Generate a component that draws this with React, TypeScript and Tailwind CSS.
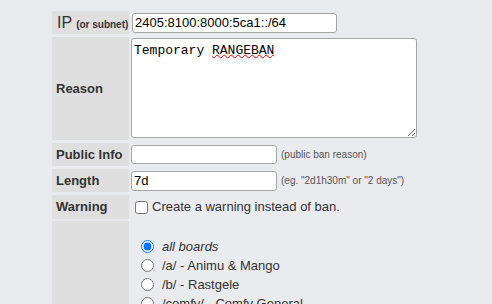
const boards = [
  { id: 'all', label: 'all boards', italic: true, checked: true },
  { id: 'a', label: '/a/ - Animu & Mango' },
  { id: 'b', label: '/b/ - Rastgele' },
  { id: 'comfy', label: '/comfy/ - Comfy General' },
];

function Label({ children, className = '' }: { children: React.ReactNode; className?: string }) {
  return (
    <div className={`bg-[#dfdfdf] flex items-center pl-[4px] font-bold text-[13px] text-[#333] ${className}`}>
      {children}
    </div>
  );
}

export default function App() {
  return (
    <div className="min-h-screen bg-[#eaebef] font-['Liberation_Sans',Arial,sans-serif] text-[#333] pt-[11px] pl-[52px] overflow-hidden h-[304px]">
      <div className="grid grid-cols-[77px_auto] gap-x-[2px] gap-y-[3px] w-max">
        {/* IP */}
        <div className="bg-[#dfdfdf] flex items-center pl-[5px] h-[23px] text-[#333]">
          <span className="text-[16px] leading-none">IP</span>
          <span className="text-[10px] font-bold ml-[4px] mt-[3px]">(or subnet)</span>
        </div>
        <div className="flex items-center pl-[1px]">
          <input
            defaultValue="2405:8100:8000:5ca1::/64"
            className="w-[205px] h-[20px] bg-white border border-[#a5a5a5] rounded-[3px] px-[2px] text-[13px] text-black outline-none"
          />
        </div>

        {/* Reason */}
        <Label className="h-[103px]">Reason</Label>
        <div className="pt-[1px] relative">
          <textarea
            defaultValue="Temporary RANGEBAN"
            spellCheck={false}
            className="block w-[286px] h-[100px] bg-white border border-[#a5a5a5] rounded-[3px] px-[2px] py-[2px] font-['Liberation_Mono',monospace] text-[13px] text-black outline-none resize"
          />
          {/* spellcheck squiggle */}
          <span className="absolute left-[81px] top-[4px] font-['Liberation_Mono',monospace] text-[13px] leading-[15px] text-transparent underline decoration-wavy decoration-[#e00] decoration-1 underline-offset-[2px] pointer-events-none select-none">
            RANGEBAN
          </span>
        </div>

        {/* Public Info */}
        <Label className="h-[23px]">Public Info</Label>
        <div className="flex items-center">
          <input className="w-[146px] h-[19px] bg-white border border-[#a5a5a5] rounded-[3px] px-[2px] text-[13px] text-black outline-none" />
          <span className="ml-[4px] text-[10px] text-[#555]">(public ban reason)</span>
        </div>

        {/* Length */}
        <Label className="h-[23px]">Length</Label>
        <div className="flex items-center">
          <input
            defaultValue="7d"
            className="w-[146px] h-[20px] bg-white border border-[#a5a5a5] rounded-[3px] px-[2px] text-[13px] text-black outline-none"
          />
          <span className="ml-[4px] text-[10px] text-[#555]">(eg. "2d1h30m" or "2 days")</span>
        </div>

        {/* Warning */}
        <Label className="h-[24px]">Warning</Label>
        <label className="flex items-center pl-[4px] text-[13px] text-[#333]">
          <input type="checkbox" className="w-[13px] h-[13px] m-0 mr-[4px]" />
          Create a warning instead of ban.
        </label>

        {/* Boards */}
        <div className="bg-[#dfdfdf] h-[120px] -mt-[1px]" />
        <div className="pt-[16px] pl-[10px] -mt-[1px]">
          {boards.map((b) => (
            <label key={b.id} className="flex items-center h-[19px] text-[13px] text-[#333]">
              <input
                type="radio"
                name="board"
                defaultChecked={b.checked}
                className="w-[13px] h-[13px] m-0 mr-[8px]"
              />
              <span className={b.italic ? 'italic' : ''}>{b.label}</span>
            </label>
          ))}
        </div>
      </div>
    </div>
  );
}
